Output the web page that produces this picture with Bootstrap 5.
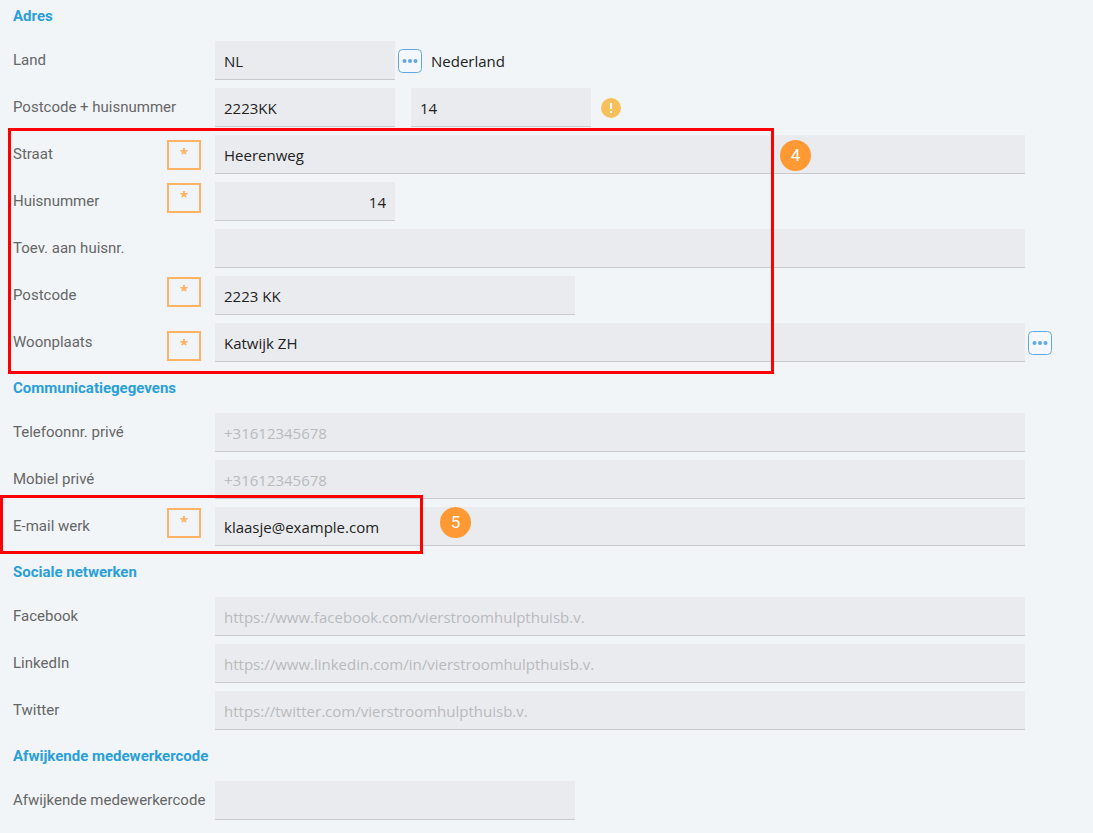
<!DOCTYPE html>
<html lang="nl">
<head>
<meta charset="utf-8">
<meta name="viewport" content="width=device-width, initial-scale=1">
<title>Adres en communicatiegegevens</title>
<link href="https://cdn.jsdelivr.net/npm/bootstrap@5.3.0/dist/css/bootstrap.min.css" rel="stylesheet">
<style>
  body { background: #f1f5f8; font: 15px/24px Roboto, sans-serif; color: #666; }
  .page { padding: 4px 0 13px; }
  .section + .section { margin-top: 14px; }
  .section-title { margin: 0 0 13px 13px; font-size: 15px; line-height: 24px; font-weight: 700; color: #2a9fd8; }
  .rows { display: grid; gap: 8px; }
  .field-label { flex: 0 0 215px; padding: 1px 14px 1px 13px; white-space: nowrap; }
  .field-label.unflagged { padding-right: 0; }
  .field-label label { line-height: 37px; }
  .required-flag { width: 34px; height: 30px; border: 2px solid #ffb366; color: #ffae5c; font: 700 15px/22px "Open Sans", sans-serif; text-align: center; }
  .field-input.form-control { height: 39px; padding: 2px 9px 0; border: 0; border-bottom: 1px solid #c9cacd; border-radius: 0; background: #eaebee; color: #222; font: 15px/24px "Open Sans", sans-serif; }
  .field-input::placeholder { color: #b9babd; opacity: 1; }
  .w-short.form-control { width: 180px; }
  .w-medium.form-control { width: 360px; }
  .trailing { flex: 0 0 68px; padding-left: 3px; }
  .lookup { width: 24px; height: 24px; padding: 0; border: 0; line-height: 0; background: none; }
  .input-gap { flex: 0 0 3px; }
  .lookup svg, .warning-icon { display: block; }
  .country { margin-left: 9px; color: #222; font: 15px/24px "Open Sans", sans-serif; }
  .callout-box { position: absolute; border: 3px solid #f00; pointer-events: none; z-index: 2; }
  .callout-address { left: 8px; top: -7px; bottom: -12px; width: 766px; }
  .callout-email { left: 0; top: -12px; bottom: -8px; width: 423px; }
  .callout-number { position: absolute; top: 9px; left: 100%; width: 31px; height: 31px; border-radius: 50%; background: #ff9933; color: #fff; font: 400 17px/31px Roboto, sans-serif; text-align: center; }
  .callout-address .callout-number { margin-left: 9px; }
  .callout-email .callout-number { margin-left: 20px; }
</style>
</head>
<body>
<form class="page">
  <section class="section">
    <h2 class="section-title">Adres</h2>
    <div class="rows">
      <div class="d-flex align-items-center">
        <div class="field-label"><label for="land">Land</label></div>
        <input class="form-control field-input w-short" id="land" value="NL">
        <span class="input-gap"></span>
        <button type="button" class="lookup" aria-label="Land zoeken"><svg width="24" height="24" viewBox="0 0 24 24"><rect x=".5" y=".5" width="23" height="23" rx="4" fill="#f4f8fc" stroke="#62a8e0"/><g fill="#62a8e0"><circle cx="6.5" cy="12" r="2"/><circle cx="12" cy="12" r="2"/><circle cx="17.5" cy="12" r="2"/></g></svg></button>
        <span class="country">Nederland</span>
      </div>
      <div class="d-flex align-items-center">
        <div class="field-label"><label for="pc-zoek">Postcode + huisnummer</label></div>
        <input class="form-control field-input w-short me-3" id="pc-zoek" value="2223KK">
        <input class="form-control field-input w-short" aria-label="Huisnummer zoeken" value="14">
        <svg class="warning-icon ms-2" width="24" height="20" viewBox="0 0 24 20"><circle cx="12" cy="10" r="10" fill="#f7c05a"/><path d="M11 5h2v6h-2zM11 13h2v2h-2z" fill="#fff"/></svg>
      </div>
      <div class="rows position-relative">
        <div class="d-flex">
          <div class="field-label d-flex justify-content-between"><label for="straat">Straat</label><span class="required-flag align-self-center">*</span></div>
          <input class="form-control field-input flex-fill w-auto" id="straat" value="Heerenweg">
          <div class="trailing"></div>
        </div>
        <div class="d-flex">
          <div class="field-label d-flex justify-content-between"><label for="huisnr">Huisnummer</label><span class="required-flag align-self-start">*</span></div>
          <input class="form-control field-input w-short text-end" id="huisnr" value="14">
        </div>
        <div class="d-flex">
          <div class="field-label"><label for="toev">Toev. aan huisnr.</label></div>
          <input class="form-control field-input flex-fill w-auto" id="toev">
          <div class="trailing"></div>
        </div>
        <div class="d-flex">
          <div class="field-label d-flex justify-content-between"><label for="postcode">Postcode</label><span class="required-flag align-self-start">*</span></div>
          <input class="form-control field-input w-medium" id="postcode" value="2223 KK">
        </div>
        <div class="d-flex">
          <div class="field-label d-flex justify-content-between"><label for="plaats">Woonplaats</label><span class="required-flag align-self-end">*</span></div>
          <input class="form-control field-input flex-fill w-auto" id="plaats" value="Katwijk ZH">
          <div class="trailing align-self-center">
            <button type="button" class="lookup d-block" aria-label="Woonplaats zoeken"><svg width="24" height="24" viewBox="0 0 24 24"><rect x=".5" y=".5" width="23" height="23" rx="4" fill="#f4f8fc" stroke="#62a8e0"/><g fill="#62a8e0"><circle cx="6.5" cy="12" r="2"/><circle cx="12" cy="12" r="2"/><circle cx="17.5" cy="12" r="2"/></g></svg></button>
          </div>
        </div>
        <div class="callout-box callout-address"><span class="callout-number">4</span></div>
      </div>
    </div>
  </section>

  <section class="section">
    <h2 class="section-title">Communicatiegegevens</h2>
    <div class="rows">
      <div class="d-flex">
        <div class="field-label"><label for="tel">Telefoonnr. privé</label></div>
        <input type="tel" class="form-control field-input flex-fill w-auto" id="tel" placeholder="+31612345678">
        <div class="trailing"></div>
      </div>
      <div class="d-flex">
        <div class="field-label"><label for="mobiel">Mobiel privé</label></div>
        <input type="tel" class="form-control field-input flex-fill w-auto" id="mobiel" placeholder="+31612345678">
        <div class="trailing"></div>
      </div>
      <div class="d-flex position-relative">
        <div class="field-label d-flex justify-content-between"><label for="email">E-mail werk</label><span class="required-flag align-self-start">*</span></div>
        <input type="email" class="form-control field-input flex-fill w-auto" id="email" value="klaasje@example.com">
        <div class="trailing"></div>
        <div class="callout-box callout-email"><span class="callout-number">5</span></div>
      </div>
    </div>
  </section>

  <section class="section">
    <h2 class="section-title">Sociale netwerken</h2>
    <div class="rows">
      <div class="d-flex">
        <div class="field-label"><label for="facebook">Facebook</label></div>
        <input class="form-control field-input flex-fill w-auto" id="facebook" placeholder="https://www.facebook.com/vierstroomhulpthuisb.v.">
        <div class="trailing"></div>
      </div>
      <div class="d-flex">
        <div class="field-label"><label for="linkedin">LinkedIn</label></div>
        <input class="form-control field-input flex-fill w-auto" id="linkedin" placeholder="https://www.linkedin.com/in/vierstroomhulpthuisb.v.">
        <div class="trailing"></div>
      </div>
      <div class="d-flex">
        <div class="field-label"><label for="twitter">Twitter</label></div>
        <input class="form-control field-input flex-fill w-auto" id="twitter" placeholder="https://twitter.com/vierstroomhulpthuisb.v.">
        <div class="trailing"></div>
      </div>
    </div>
  </section>

  <section class="section">
    <h2 class="section-title">Afwijkende medewerkercode</h2>
    <div class="d-flex">
      <div class="field-label unflagged"><label for="code">Afwijkende medewerkercode</label></div>
      <input class="form-control field-input w-medium" id="code">
    </div>
  </section>
</form>
<script src="https://cdn.jsdelivr.net/npm/bootstrap@5.3.0/dist/js/bootstrap.bundle.min.js"></script>
</body>
</html>
